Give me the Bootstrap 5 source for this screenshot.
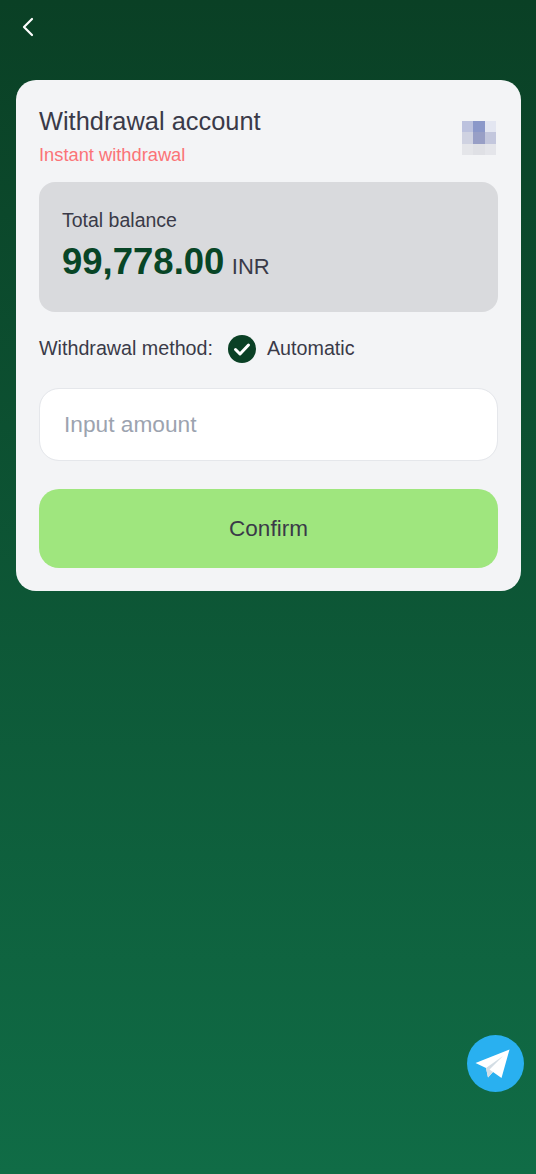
<!DOCTYPE html>
<html lang="en">
  <head>
    <meta charset="UTF-8" />
    <meta name="viewport" content="width=device-width, initial-scale=1" />
    <title>Withdrawal</title>
    <link
      href="https://cdn.jsdelivr.net/npm/bootstrap@5.3.3/dist/css/bootstrap.min.css"
      rel="stylesheet"
    />
    <style>
      html,
      body {
        height: 100%;
      }

      body {
        font-family: "Liberation Sans", Arial, sans-serif;
        color: #3a3a48;
        background: linear-gradient(180deg, #0a4025 0%, #106c46 100%);
      }

      .page-wrap {
        min-height: 1174px;
        padding: 0 15px 0 16px;
        position: relative;
      }

      .top-bar {
        height: 80px;
        padding-top: 14px;
      }

      .back-link {
        display: block;
        width: 24px;
        height: 24px;
      }

      .panel {
        background: #f3f4f6;
        border-radius: 20px;
        padding: 23px;
        height: 511px;
      }

      .panel-title {
        font-size: 25.4px;
        line-height: 36px;
      }

      .panel-sub {
        font-size: 18.3px;
        line-height: 24px;
        margin-top: 4px;
        color: #fb7377;
      }

      .blur-logo {
        width: 34px;
        height: 34px;
        display: grid;
        grid-template-columns: repeat(3, 1fr);
        grid-template-rows: repeat(3, 1fr);
        margin-top: 18px;
        margin-right: 2px;
      }

      .balance-box {
        height: 130px;
        background: #d9dadd;
        border-radius: 16px;
        padding: 26px 23px;
        margin-top: 15px;
      }

      .balance-label {
        font-size: 19.5px;
        line-height: 24px;
      }

      .balance-line {
        margin-top: 7px;
        line-height: 46px;
      }

      .balance-num {
        font-size: 36.5px;
        font-weight: 700;
        color: #084526;
      }

      .balance-cur {
        font-size: 22px;
        margin-left: 3px;
      }

      .method-row {
        height: 28px;
        margin-top: 23px;
        font-size: 19.7px;
      }

      .check-dot {
        width: 28px;
        height: 28px;
        margin: 0 11px 0 15px;
      }

      .amount-input.form-control {
        height: 73px;
        margin-top: 25px;
        border-radius: 20px;
        border: 1px solid #e5e7eb;
        font-size: 22.7px;
        padding: 0 24px;
        color: #3a3a48;
      }

      .amount-input.form-control::placeholder {
        color: #9ca3af;
      }

      .confirm-btn.btn {
        height: 79px;
        margin-top: 28px;
        background: #9fe67e;
        border: 0;
        border-radius: 20px;
        font-size: 22.5px;
        color: #3a3a48;
      }

      .tg-btn {
        position: absolute;
        left: 467px;
        top: 1035px;
        width: 57px;
        height: 57px;
      }
    </style>
  </head>
  <body>
    <div class="page-wrap">
      <div class="top-bar">
        <a class="back-link" href="#" aria-label="Back">
          <svg width="24" height="24" viewBox="0 0 24 24" fill="none">
            <path d="M16 4 L8 12 L16 20" stroke="#fff" stroke-width="2.2" stroke-linecap="round" stroke-linejoin="round" />
          </svg>
        </a>
      </div>

      <div class="panel">
        <div class="d-flex justify-content-between">
          <div>
            <div class="panel-title">Withdrawal account</div>
            <div class="panel-sub">Instant withdrawal</div>
          </div>
          <div class="blur-logo">
            <i style="background: #bcc2de"></i><i style="background: #8b98c9"></i><i style="background: #e3e6f1"></i>
            <i style="background: #cfd2e1"></i><i style="background: #989fc6"></i><i style="background: #c3c7dd"></i>
            <i style="background: #e4e5e9"></i><i style="background: #dfe0e5"></i><i style="background: #e4e5ea"></i>
          </div>
        </div>

        <div class="balance-box">
          <div class="balance-label">Total balance</div>
          <div class="balance-line"><span class="balance-num">99,778.00</span> <span class="balance-cur">INR</span></div>
        </div>

        <div class="method-row d-flex align-items-center">
          <span>Withdrawal method:</span>
          <svg class="check-dot" viewBox="0 0 28 28">
            <circle cx="14" cy="14" r="14" fill="#0a4025" />
            <path d="M7.5 14.5 L12 19 L20.5 10" fill="none" stroke="#fff" stroke-width="3" stroke-linecap="round" stroke-linejoin="round" />
          </svg>
          <span>Automatic</span>
        </div>

        <input class="form-control amount-input" type="text" placeholder="Input amount" />
        <button class="btn confirm-btn w-100" type="button">Confirm</button>
      </div>

      <a class="tg-btn" href="#" aria-label="Telegram">
        <svg width="57" height="57" viewBox="0 0 57 57">
          <circle cx="28.5" cy="28.5" r="28.5" fill="#29b0f0" />
          <path d="M8.5 28 L42.5 14.5 L34.5 43 L26 37 L21 42.5 L19 33 Z" fill="#fff" />
          <path d="M19 33 L21 42.5 L26 37 L22.5 34.5 L36 21 Z" fill="#d3dde4" />
        </svg>
      </a>
    </div>

    <script src="https://cdn.jsdelivr.net/npm/bootstrap@5.3.3/dist/js/bootstrap.bundle.min.js"></script>
  </body>
</html>
